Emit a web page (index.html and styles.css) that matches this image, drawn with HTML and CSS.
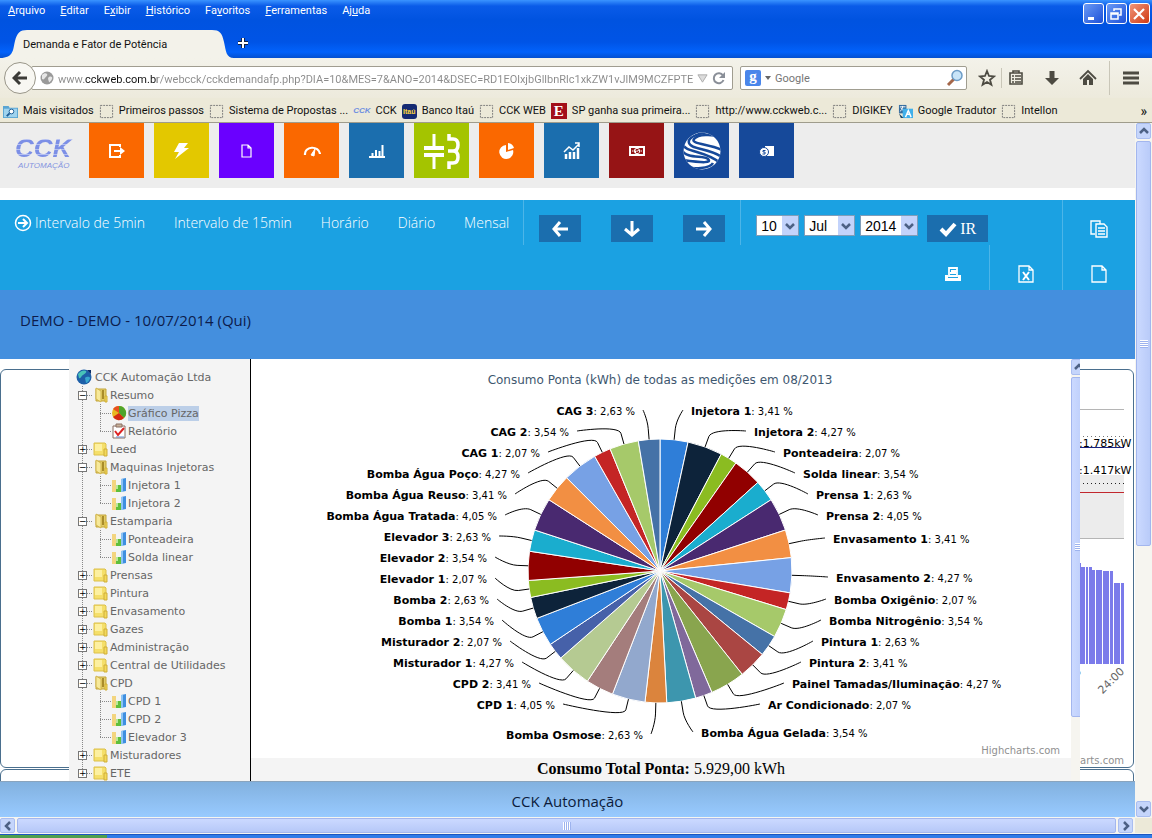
FILE: index.html
```html
<!DOCTYPE html>
<html lang="pt-BR">
<head>
<meta charset="utf-8">
<title>Demanda e Fator de Potência</title>
<link rel="stylesheet" href="styles.css">
</head>
<body>
<svg class="defs" aria-hidden="true">
  <symbol id="folder" viewBox="0 0 16 16"><path d="M1 2h11l1 1v11H1z" fill="#f5df6a" stroke="#dcc04a"/><path d="M2 3h7v7H2z" fill="#fdf0a0"/><path d="M11 8h3v7h-3z" fill="#f3d95b" stroke="#cfae38"/></symbol>
  <symbol id="folder-open" viewBox="0 0 16 16"><path d="M3 2h10v12H3z" fill="#e3cd69" stroke="#c3a53b"/><path d="M3 1l5 3v11l-5-3z" fill="#f7e99a" stroke="#d3b74c"/><path d="M9 3h2v9H9z" fill="#a98c2b"/><path d="M12 9h2v6h-2z" fill="#f3d95b" stroke="#cfae38"/></symbol>
  <symbol id="bars" viewBox="0 0 16 16"><path d="M1 3h4v12H1z" fill="#f3d57f"/><path d="M5 8h5v7H5z" fill="#5fbf3c"/><path d="M10 2l5-1v13l-5 1z" fill="#3f8fe0"/><path d="M10 2l2 0v13h-2z" fill="#8cc4f5"/><path d="M5 8h2v4H5z" fill="#b9e79b"/></symbol>
  <symbol id="pie" viewBox="0 0 16 16"><circle cx="8" cy="8" r="7" fill="#e8b820"/><path d="M8 8V1a7 7 0 0 1 5 12z" fill="#4fa52a"/><path d="M8 8L2 4a7 7 0 0 1 6-3z" fill="#e8501e"/><path d="M8 8l5 5a7 7 0 0 1-11-1z" fill="#d42a12"/></symbol>
  <symbol id="report" viewBox="0 0 16 16"><path d="M2 3h12v12H2z" fill="#fff" stroke="#8a6f62"/><path d="M5 1h6v3H5z" fill="#c9b29a" stroke="#8a6f62"/><path d="M4 8l3 4 6-7" fill="none" stroke="#d22" stroke-width="2"/><path d="M5 14h8" stroke="#6a8fd0"/></symbol>
  <symbol id="globe" viewBox="0 0 16 16"><circle cx="8" cy="8" r="7.500" fill="#1d5fa8"/><path d="M2 5c3-4 7-4 8-3s-1 3-3 4-2 4-4 3z" fill="#48c3b8"/><path d="M9 9c2-2 5-1 5 0s-2 5-4 5z" fill="#39a7cf"/><path d="M11 1h4v4z" fill="#0a2d68"/></symbol>
  <symbol id="blank" viewBox="0 0 16 16"><path d="M1.500 1.500h13v13h-13z" fill="none" stroke="#777" stroke-dasharray="2 1"/></symbol>
  <symbol id="caret" viewBox="0 0 10 8"><path d="M1 2l4 4 4-4" fill="none" stroke="#4d6185" stroke-width="2.500"/></symbol>
</svg>

<header class="titlebar">
  <nav class="menu">
    <a href="#"><u>A</u>rquivo</a><a href="#"><u>E</u>ditar</a><a href="#">E<u>x</u>ibir</a><a href="#"><u>H</u>istórico</a><a href="#">Fa<u>v</u>oritos</a><a href="#"><u>F</u>erramentas</a><a href="#">Aj<u>u</u>da</a>
    <span class="winbtns">
      <button class="win" aria-label="Minimizar"><svg viewBox="0 0 18 18"><path d="M4 12h6v3H4z" fill="#fff"/></svg></button>
      <button class="win" aria-label="Restaurar"><svg viewBox="0 0 18 18"><path d="M7 6V4h7v6h-2M4 8h7v6H4zM4 9h7" fill="none" stroke="#fff" stroke-width="1.500"/></svg></button>
      <button class="win close" aria-label="Fechar"><svg viewBox="0 0 18 18"><path d="M4 4l10 10M14 4L4 14" stroke="#fff" stroke-width="2.200"/></svg></button>
    </span>
  </nav>
  <div class="tabs">
    <svg class="tabshape" viewBox="0 0 234 29" aria-hidden="true"><path d="M0 29C14 29 13 20 15 12S20 1 27 1H212C220 1 222 4 224 13S226 29 234 29z" fill="#f3f2ea"/></svg>
    <span class="tabname">Demanda e Fator de Potência</span>
    <button class="newtab" aria-label="Nova aba"><svg viewBox="0 0 12 12"><path d="M6 1v10M1 6h10" stroke="#124" stroke-width="4"/><path d="M6 1v10M1 6h10" stroke="#fff" stroke-width="2"/></svg></button>
  </div>
</header>

<div class="navbar">
  <button class="back" aria-label="Voltar"><svg viewBox="0 0 16 16"><path d="M8 2L2 8l6 6M2.500 8H15" fill="none" stroke="#3c3b37" stroke-width="3"/></svg></button>
  <div class="field url">
    <svg viewBox="0 0 14 14" class="i14"><circle cx="7" cy="7" r="6.500" fill="#9a9a9a"/><path d="M2 4c2-2 4-2 5-1s-1 3-2 4-1 2-3 1zM9 6c2-1 4 0 3 2s-3 4-3 3-2-4 0-5z" fill="#e6e6e6"/></svg>
    <input class="urltext" aria-label="Endereço" value="www.cckweb.com.br/webcck/cckdemandafp.php?DIA=10&amp;MES=7&amp;ANO=2014&amp;DSEC=RD1EOlxjbGllbnRlc1xkZW1vJlM9MCZFPTE2Jkl">
    <svg viewBox="0 0 12 12" class="i12"><path d="M1 2h10L6 10z" fill="#dcdcdc" stroke="#aaa"/></svg>
    <svg viewBox="0 0 14 14" class="i14"><path d="M11 4.500A5 5 0 1 0 11.500 9" fill="none" stroke="#8a8f98" stroke-width="2"/><path d="M13 1v6H7z" fill="#8a8f98"/></svg>
  </div>
  <div class="field search">
    <span class="g">g</span>
    <svg viewBox="0 0 6 4" class="dd"><path d="M0 0h6L3 4z" fill="#666"/></svg>
    <input aria-label="Pesquisar" placeholder="Google">
    <svg viewBox="0 0 18 18" class="i18"><path d="M2 16l6-6" stroke="#a5674a" stroke-width="3"/><circle cx="11" cy="6.500" r="5" fill="#c8e4f8" stroke="#6d9cc6" stroke-width="1.500"/></svg>
  </div>
  <div class="tools">
    <svg viewBox="0 0 18 18"><path d="M9 2l2 5 5 .4-4 3.300 1.400 5L9 13l-4.400 2.700 1.400-5-4-3.300L7 7z" fill="none" stroke="#4d4b42" stroke-width="1.800"/></svg>
    <i class="sep"></i>
    <svg viewBox="0 0 18 18"><path d="M3 4h12v11H3zM6 2h6v2H6zM5 7h2M8 7h6M5 10h2M8 10h6M5 13h2M8 13h6" fill="none" stroke="#4d4b42" stroke-width="1.600"/></svg>
    <svg viewBox="0 0 18 18"><path d="M6.500 2h5v7H16l-7 7-7-7h4.500z" fill="#4d4b42"/></svg>
    <svg viewBox="0 0 18 18"><path d="M1 10l8-8 8 8" fill="none" stroke="#4d4b42" stroke-width="1.800"/><path d="M4 10l5-5 5 5v6h-4v-5H8v5H4z" fill="#4d4b42"/></svg>
    <i class="sep tall"></i>
    <svg viewBox="0 0 18 18"><path d="M1 4h16M1 9h16M1 14h16" stroke="#4d4b42" stroke-width="3"/></svg>
  </div>
</div>

<nav class="bookmarks">
  <a href="#"><svg viewBox="0 0 16 16"><path d="M0 2h6l1 2h9v11H0z" fill="#5aa5d2"/><path d="M1 5h14v9H1z" fill="#9fd3ee"/><circle cx="9" cy="8" r="2.500" fill="#fff" stroke="#1d5c93"/><path d="M7 10l-3 3" stroke="#1d5c93" stroke-width="2"/></svg>Mais visitados</a>
  <a href="#"><svg><use href="#blank"/></svg>Primeiros passos</a>
  <a href="#"><svg><use href="#blank"/></svg>Sistema de Propostas ...</a>
  <a href="#"><span class="cckico">CCK</span>CCK</a>
  <a href="#"><span class="itau">Itaú</span>Banco Itaú</a>
  <a href="#"><svg><use href="#blank"/></svg>CCK WEB</a>
  <a href="#"><span class="eico">E</span>SP ganha sua primeira...</a>
  <a href="#"><svg><use href="#blank"/></svg>http://www.cckweb.c...</a>
  <a href="#"><svg><use href="#blank"/></svg>DIGIKEY</a>
  <a href="#"><svg viewBox="0 0 16 16"><path d="M1 1h8v9H1z" fill="#356d9f"/><path d="M2 3h6M5 2c0 4-2 5-3 6M3 4c1 2 3 3 4 4" stroke="#fff" fill="none"/><path d="M5 5h11v10H5z" fill="#41b0ea"/><path d="M8 14l3-7 3 7M9 11h4" stroke="#fff" stroke-width="1.500" fill="none"/><path d="M1 10l5 5H3z" fill="#1c4566"/></svg>Google Tradutor</a>
  <a href="#"><svg><use href="#blank"/></svg>Intellon</a>
  <span class="more">»</span>
</nav>

<div class="view">
  <div class="page">
    <header class="apps">
      <div class="logo"><b>CCK</b><small>AUTOMAÇÃO</small></div>
      <button class="tile orange" aria-label="Sair"><svg viewBox="0 0 18 18"><path d="M12 5V3H2v12h10v-2" fill="none" stroke="#fff" stroke-width="2"/><path d="M6 8h6V5l5 4-5 4v-3H6z" fill="#fff"/></svg></button>
      <button class="tile yellow" aria-label="Energia"><svg viewBox="0 0 18 18"><path d="M6 1h9l-4 5h5L2 17l4-7H1z" fill="#fff"/></svg></button>
      <button class="tile violet" aria-label="Documento"><svg viewBox="0 0 18 18"><path d="M4 3h6l3 3v9H4zM10 3v3h3" fill="none" stroke="#fff" stroke-width="1.200"/></svg></button>
      <button class="tile orange" aria-label="Medidor"><svg viewBox="0 0 18 18"><path d="M2 13c-1-9 14-10 15-1" fill="none" stroke="#fff" stroke-width="2.200"/><path d="M12 7l-1 7-3-1z" fill="#fff" stroke="#fff"/></svg></button>
      <button class="tile blue" aria-label="Barras"><svg viewBox="0 0 18 18"><path d="M1 15h16M4.500 11v3M8 8v6M11.500 9v5M14.500 3v11" stroke="#fff" stroke-width="2"/></svg></button>
      <button class="tile green" aria-label="Capacitor"><svg class="big" viewBox="0 0 40 40"><path d="M12 3v13M12 25v13" stroke="#fff" stroke-width="3"/><path d="M2 17h20M2 24h20" stroke="#fff" stroke-width="4"/><path d="M27 3v5h4q5 0 5 6t-5 6h-5M31 20q5 0 5 6t-5 6h-4v6" fill="none" stroke="#fff" stroke-width="3.500"/></svg></button>
      <button class="tile orange" aria-label="Pizza"><svg viewBox="0 0 18 18"><path d="M8 3v7l7-2a7 7 0 1 1-7-5z" fill="#fff"/><path d="M10 1a7 7 0 0 1 6 5l-6 2z" fill="#fff"/></svg></button>
      <button class="tile blue" aria-label="Tendência"><svg viewBox="0 0 18 18"><path d="M3 12v5M7 10v7M11 10v7M15 6v11" stroke="#fff" stroke-width="2.500"/><path d="M1 10l5-5 4 3 6-6M12 1h4v4" fill="none" stroke="#fff" stroke-width="1.500"/></svg></button>
      <button class="tile red" aria-label="Custo"><svg viewBox="0 0 18 18"><path d="M1 4h16v10H1z" fill="#fff"/><path d="M3 6h12v6H3z" fill="#961415"/><circle cx="9" cy="9" r="3" fill="#fff"/><path d="M10.500 7.500H8v1.500h2.500v1.500H8" stroke="#961415" fill="none"/><path d="M4 9h1.500M12.500 9H14" stroke="#fff"/></svg></button>
      <button class="tile navy" aria-label="Esfera"><svg class="big" viewBox="0 0 40 40"><clipPath id="ball"><circle cx="20" cy="20" r="18.500"/></clipPath><g clip-path="url(#ball)"><path d="M0 0h40v40H0z" fill="#fff"/><g fill="none" stroke="#16499a" stroke-width="2.500"><path d="M40 6C30 3 16 3 12 8s16 5 28 11"/><path d="M30 0C20 2 5 5 7 12s22 5 34 15"/><path d="M0 12c2 10 24 7 38 20"/><path d="M0 19c4 9 22 5 26 9s-4 4-26 1"/><path d="M0 36c12 2 28 2 31-4"/></g></g></svg></button>
      <button class="tile navy" aria-label="Fatura"><svg viewBox="0 0 18 18"><path d="M7 4h9v10H7z" fill="#fff"/><circle cx="6" cy="10" r="4.500" fill="#fff" stroke="#14489a"/><path d="M7.500 8.500H5V10h2v2H4.500" stroke="#14489a" fill="none"/></svg></button>
    </header>

    <div class="actions">
      <div class="row">
        <nav class="ranges">
          <a href="#"><svg viewBox="0 0 18 18"><circle cx="9" cy="9" r="7.500" fill="none" stroke="#fff" stroke-width="1.500"/><path d="M4 9h9M9 5l4 4-4 4" fill="none" stroke="#fff" stroke-width="2"/></svg>Intervalo de 5min</a>
          <a href="#">Intervalo de 15min</a><a href="#">Horário</a><a href="#">Diário</a><a href="#">Mensal</a>
        </nav>
        <div class="group arrows">
          <button aria-label="Anterior"><svg viewBox="0 0 18 18"><path d="M9 2L3 9l6 7M3 9h14" fill="none" stroke="#fff" stroke-width="3"/></svg></button>
          <button aria-label="Abaixo"><svg viewBox="0 0 18 18"><path d="M2 9l7 6 7-6M9 15V1" fill="none" stroke="#fff" stroke-width="3"/></svg></button>
          <button aria-label="Próximo"><svg viewBox="0 0 18 18"><path d="M9 2l6 7-6 7M15 9H1" fill="none" stroke="#fff" stroke-width="3"/></svg></button>
        </div>
        <div class="group dates">
          <span class="pick"><select aria-label="Dia" class="day"><option>10</option></select><svg><use href="#caret"/></svg></span>
          <span class="pick"><select aria-label="Mês" class="month"><option>Jul</option></select><svg><use href="#caret"/></svg></span>
          <span class="pick"><select aria-label="Ano" class="year"><option>2014</option></select><svg><use href="#caret"/></svg></span>
          <button class="go"><svg viewBox="0 0 18 18"><path d="M2 9l5 5 9-10" fill="none" stroke="#fff" stroke-width="4"/></svg>IR</button>
        </div>
        <button class="cell" aria-label="Copiar"><svg viewBox="0 0 18 18"><path d="M5 14H1V1h9v3M6 4h8l3 3v10H6zM8 8h7M8 11h7M8 14h7" fill="none" stroke="#fff" stroke-width="1.400"/></svg></button>
      </div>
      <div class="row end">
        <button class="cell plain" aria-label="Imprimir"><svg viewBox="0 0 18 18"><path d="M5 3h8v8H5zM7 6h6M6 8h6" fill="none" stroke="#fff" stroke-width="1.800"/><path d="M1 10h3v3h10v-3h3v6H1z" fill="#fff"/></svg></button>
        <button class="cell" aria-label="Excel"><svg viewBox="0 0 18 18"><path d="M2 1h10l4 4v12H2zM12 1v4h4" fill="none" stroke="#fff" stroke-width="1.300"/><path d="M6 7l6 8M12 7l-6 8" stroke="#fff" stroke-width="2"/></svg></button>
        <button class="cell" aria-label="Novo"><svg viewBox="0 0 18 18"><path d="M2 1h10l4 4v12H2zM12 1v4h4" fill="none" stroke="#fff" stroke-width="1.300"/></svg></button>
      </div>
    </div>

    <h1 class="heading">DEMO - DEMO - 10/07/2014 (Qui)</h1>

    <main class="stage">
      <section class="panel">
        <svg class="demand" viewBox="0 0 54 398" aria-label="Demanda">
          <path d="M0 105h45v64H0z" fill="#ececec"/>
          <path d="M0 39.500h45M0 168.500h45" stroke="#b5b5b5"/>
          <path d="M0 66.500h45" stroke="#777" stroke-dasharray="1 3"/>
          <path d="M0 77.500h45" stroke="#1a237e"/>
          <path d="M0 113.500h45" stroke="#222" stroke-dasharray="1 3"/>
          <path d="M0 122.500h45" stroke="#c1272d"/>
          <text x="0" y="77">:1.785kW</text><text x="0" y="104">:1.417kW</text>
          <path d="M0 193h2v4h4v97H0zM7 197h2v97H7zM10 197h3v3h3v94h-6zM17 200h6v94h-6zM24 201h6v93h-6zM31 201h3v93h-3zM35 213h6v81h-6zM42 213h3v81h-3z" fill="#7b7bea"/>
          <text class="tick" transform="translate(46 302) rotate(-45)" text-anchor="end">24:00</text>
          <text class="tick" transform="translate(3 302) rotate(-45)" text-anchor="end">23:00</text>
          <text class="credit" x="45" y="394" text-anchor="end">Highcharts.com</text>
        </svg>
      </section>
      <section class="panel next"></section>

      <div class="modal">
        <div class="tree">
          <div class="node root"><svg><use href="#globe"/></svg><a href="#">CCK Automação Ltda</a></div>
          <ul class="lvl1">
            <li><div class="node"><button aria-label="Recolher">−</button><i></i><svg><use href="#folder-open"/></svg><a href="#">Resumo</a></div>
              <ul><li class="node"><i></i><svg><use href="#pie"/></svg><a href="#" class="on">Gráfico Pizza</a></li><li class="node"><i></i><svg><use href="#report"/></svg><a href="#">Relatório</a></li></ul></li>
            <li><div class="node"><button aria-label="Expandir">+</button><i></i><svg><use href="#folder"/></svg><a href="#">Leed</a></div></li>
            <li><div class="node"><button aria-label="Recolher">−</button><i></i><svg><use href="#folder-open"/></svg><a href="#">Maquinas Injetoras</a></div>
              <ul><li class="node"><i></i><svg><use href="#bars"/></svg><a href="#">Injetora 1</a></li><li class="node"><i></i><svg><use href="#bars"/></svg><a href="#">Injetora 2</a></li></ul></li>
            <li><div class="node"><button aria-label="Recolher">−</button><i></i><svg><use href="#folder-open"/></svg><a href="#">Estamparia</a></div>
              <ul><li class="node"><i></i><svg><use href="#bars"/></svg><a href="#">Ponteadeira</a></li><li class="node"><i></i><svg><use href="#bars"/></svg><a href="#">Solda linear</a></li></ul></li>
            <li><div class="node"><button aria-label="Expandir">+</button><i></i><svg><use href="#folder"/></svg><a href="#">Prensas</a></div></li>
            <li><div class="node"><button aria-label="Expandir">+</button><i></i><svg><use href="#folder"/></svg><a href="#">Pintura</a></div></li>
            <li><div class="node"><button aria-label="Expandir">+</button><i></i><svg><use href="#folder"/></svg><a href="#">Envasamento</a></div></li>
            <li><div class="node"><button aria-label="Expandir">+</button><i></i><svg><use href="#folder"/></svg><a href="#">Gazes</a></div></li>
            <li><div class="node"><button aria-label="Expandir">+</button><i></i><svg><use href="#folder"/></svg><a href="#">Administração</a></div></li>
            <li><div class="node"><button aria-label="Expandir">+</button><i></i><svg><use href="#folder"/></svg><a href="#">Central de Utilidades</a></div></li>
            <li><div class="node"><button aria-label="Recolher">−</button><i></i><svg><use href="#folder-open"/></svg><a href="#">CPD</a></div>
              <ul><li class="node"><i></i><svg><use href="#bars"/></svg><a href="#">CPD 1</a></li><li class="node"><i></i><svg><use href="#bars"/></svg><a href="#">CPD 2</a></li><li class="node"><i></i><svg><use href="#bars"/></svg><a href="#">Elevador 3</a></li></ul></li>
            <li><div class="node"><button aria-label="Expandir">+</button><i></i><svg><use href="#folder"/></svg><a href="#">Misturadores</a></div></li>
            <li><div class="node"><button aria-label="Expandir">+</button><i></i><svg><use href="#folder"/></svg><a href="#">ETE</a></div></li>
          </ul>
        </div>
        <div class="report">
          <svg id="chart" class="chart" viewBox="-409 -212 820 399" role="img" aria-label="Consumo Ponta por medição"></svg>
          <p class="total"><b>Consumo Total Ponta:</b> 5.929,00 kWh</p>
        </div>
        <div class="vbar inner" aria-hidden="true"><span class="btn"><svg class="up"><use href="#caret"/></svg></span><span class="thumb"><i class="grip"></i></span></div>
      </div>
    </main>

    <footer class="foot">CCK Automação</footer>
  </div>
  <div class="vbar" aria-hidden="true"><span class="btn"><svg class="up"><use href="#caret"/></svg></span><span class="thumb"><i class="grip"></i></span><span class="track"></span><span class="btn"><svg><use href="#caret"/></svg></span></div>
</div>
<div class="hbar" aria-hidden="true"><span class="btn"><svg class="left"><use href="#caret"/></svg></span><span class="thumb"><i class="grip"></i></span><span class="btn"><svg class="right"><use href="#caret"/></svg></span><span class="corner"></span></div>
<div class="taskbar"><span></span></div>
<script src="chart.js"></script>
</body>
</html>
```

FILE: styles.css
```css
* { box-sizing: border-box; }
body {
  margin: 0; height: 100vh; overflow: hidden; display: flex; flex-direction: column;
  font: 11px/14px Roboto, "Noto Sans", sans-serif; color: #111; background: #fff;
}
a { color: inherit; text-decoration: none; }
button { border: 0; padding: 0; margin: 0; background: none; font: inherit; color: inherit; }
input { border: 0; padding: 0; background: none; font: inherit; min-width: 0; outline: 0; }
svg { display: block; flex: none; }
.defs { position: absolute; width: 0; height: 0; }

.titlebar { flex: none; height: 58px; background: linear-gradient(#3a93ff 0, #0a5be8 6px, #0053e0 20px, #0054e6 42px, #0262fb 52px, #0450d0 58px); }
.menu { display: flex; align-items: flex-start; gap: 15px; height: 28px; padding: 3px 2px 0 8px; color: #fff; line-height: 16px; }
.winbtns { display: flex; gap: 2px; margin-left: auto; }
.win { width: 21px; height: 21px; border: 1px solid #fff; border-radius: 3px; background: linear-gradient(135deg, #6a9af5, #1c50d8); }
.win.close { background: linear-gradient(135deg, #f0957a, #d03a12); }
.win svg { width: 18px; height: 18px; }
.tabs { position: relative; display: flex; align-items: center; height: 30px; }
.tabshape { position: absolute; left: 0; top: 1px; width: 234px; height: 29px; }
.tabname { position: relative; width: 237px; padding: 3px 0 0 23px; }
.newtab svg { width: 12px; height: 12px; }

.navbar { flex: none; display: flex; align-items: center; height: 40px; padding-left: 4px; background: linear-gradient(#f3f2ea, #edeadc); }
.back { position: relative; width: 32px; height: 32px; margin-right: -5px; border: 1px solid #999689; border-radius: 50%; background: #f8f7f2; display: grid; place-items: center; flex: none; }
.back svg { width: 16px; height: 16px; }
.field { display: flex; align-items: center; height: 24px; background: #fff; border: 1px solid #a09d90; border-radius: 2px; }
.url { flex: 1; padding: 0 6px 0 8px; gap: 4px; margin-right: 7px; }
.urltext {
  flex: 1; height: 16px; padding-top: 2px; color: transparent; -webkit-text-fill-color: transparent;
  background: linear-gradient(90deg, #8a8a8a 26px, #111 26px, #111 99px, #8a8a8a 99px);
  background-clip: text; -webkit-background-clip: text;
}
.i12 { width: 11px; height: 11px; }
.i14 { width: 14px; height: 14px; }
.i18 { width: 18px; height: 18px; }
.search { width: 227px; padding: 0 2px 0 4px; gap: 4px; color: #777; }
.search input { flex: 1; padding-top: 2px; }
.g { width: 16px; height: 16px; border-radius: 2px; background: #4a86ea; color: #fff; font: bold 15px/12px "Liberation Serif", serif; text-align: center; }
.dd { width: 6px; height: 4px; }
.tools { display: flex; align-items: center; gap: 18px; padding: 0 12px 0 11px; height: 100%; }
.tools svg { width: 18px; height: 18px; }
.sep { width: 1px; height: 20px; background: #c9c6b8; margin: 0 -13px; }
.sep.tall { height: 34px; margin: 0 -6px; }

.bookmarks { flex: none; display: flex; align-items: center; gap: 5px; height: 25px; padding: 1px 5px 0 3px; background: #ece9d8; border-bottom: 1px solid #9f9c8c; white-space: nowrap; line-height: 16px; }
.bookmarks a { display: flex; align-items: center; gap: 5px; padding-top: 1px; }
.bookmarks svg { width: 15px; height: 15px; }
.more { margin-left: auto; font-size: 14px; }
.cckico { color: #6f8fe0; font: italic bold 8px/14px "Liberation Sans", sans-serif; }
.itau { width: 15px; height: 15px; border-radius: 3px; background: #152a73; color: #ffd93b; font: bold 7px/16px "Liberation Sans", sans-serif; text-align: center; }
.eico { width: 16px; height: 16px; background: #a30f19; color: #fff; font: bold 15px/16px "Liberation Serif", serif; text-align: center; }

.view { flex: 1; min-height: 0; display: flex; }
.page { flex: 1; min-width: 0; display: flex; flex-direction: column; }

.apps { flex: none; display: flex; gap: 10px; height: 65px; margin-bottom: 12px; padding-left: 15px; background: #ededed; }
.logo { width: 64px; padding-top: 12px; }
.logo b { display: block; font: italic bold 26px/26px "Liberation Sans", sans-serif; color: transparent; background: repeating-linear-gradient(#7c8fe6 0 4px, #b5c0f1 4px 5px); background-clip: text; -webkit-background-clip: text; }
.logo small { display: block; font: italic 8px/10px "Liberation Sans", sans-serif; color: #8494e0; padding-left: 3px; }
.tile { width: 55px; height: 55px; display: grid; place-items: center; }
.tile svg { width: 18px; height: 18px; }
.tile svg.big { width: 40px; height: 40px; }
.orange { background: #fa6800; }
.yellow { background: #e3c800; }
.violet { background: #6a00ff; }
.blue { background: #1b6eae; }
.green { background: #a4c400; }
.red { background: #961415; }
.navy { background: #16499a; }

.actions { flex: none; background: #1ba1e2; color: #fff; }
.row { display: flex; height: 45px; }
.row.end { justify-content: flex-end; }
.ranges { display: flex; align-items: flex-start; gap: 29px; padding: 14px 14px 0 14px; font: 300 14px/18px "Open Sans", sans-serif; white-space: nowrap; }
.ranges a { display: flex; align-items: center; gap: 3px; }
.ranges svg { width: 18px; height: 18px; }
.group { display: flex; align-items: flex-start; border-left: 1px solid #4cb5e8; padding: 15px 15px 0; }
.arrows { gap: 30px; }
.arrows button, .go { height: 27px; width: 42px; background: #1b6eae; display: grid; place-items: center; }
.arrows svg, .go svg { width: 18px; height: 18px; }
.dates { gap: 5px; }
.dates .go { width: 61px; margin-left: 4px; display: flex; align-items: center; justify-content: center; gap: 3px; font: 16px/29px "Liberation Serif", serif; }
.pick { position: relative; }
.pick select { appearance: none; height: 21px; padding: 0 4px; border: 1px solid #7f9db9; border-radius: 0; background: linear-gradient(90deg, #fff calc(100% - 16px), #c3d3fb calc(100% - 16px)); font: 14px/18px "Liberation Sans", sans-serif; color: #000; display: block; }
.pick svg { position: absolute; right: 4px; top: 7px; width: 10px; height: 8px; pointer-events: none; }
.day { width: 43px; }
.month { width: 51px; }
.year { width: 58px; }
.cell { width: 73px; height: 45px; border-left: 1px solid #4cb5e8; display: grid; place-items: center; padding-top: 12px; }
.cell svg { width: 18px; height: 18px; }
.cell.plain { border-left: 0; }
.row > .cell:last-child { margin-left: auto; }
.row.end > .cell:last-child { margin-left: 0; }

.heading { flex: none; height: 69px; margin: 0; padding: 19px 20px 0; background: #448fde; color: #0c1c4c; font: 15px/22px "Open Sans", sans-serif; }

.stage { position: relative; flex: 1; min-height: 0; overflow: hidden; padding-top: 10px; display: flex; flex-direction: column; gap: 1px; }
.panel { flex: none; height: 399px; margin-right: 1px; border: 1px solid #4a6f8e; border-radius: 6px; display: flex; justify-content: flex-end; }
.demand { width: 54px; height: 398px; overflow: visible; font: 11px "DejaVu Sans", sans-serif; }
.tick { font-size: 11px; fill: #666; }
.credit { font: 10px "DejaVu Sans", sans-serif; fill: #909090; }
.modal { position: absolute; top: 0; bottom: 0; left: 69px; right: 55px; display: flex; background: #fff; }

.tree { flex: none; width: 182px; padding-top: 9px; background: #f4f4f4; border-right: 1px solid #000; font: 11px/14px "DejaVu Sans", sans-serif; color: #666; overflow: hidden; white-space: nowrap; }
.tree ul { list-style: none; margin: 0; padding: 0; }
.node { display: flex; align-items: center; height: 18px; }
.node svg { width: 16px; height: 16px; margin-right: 1px; }
.node a { padding-top: 1px; }
.root { padding-left: 7px; }
.root svg { margin-right: 3px; }
.lvl1 { background: repeating-linear-gradient(#888 0 1px, transparent 1px 2px) 13px 0 / 1px calc(100% - 9px) no-repeat; }
.lvl1 > li > .node { padding-left: 9px; }
.node button { width: 9px; height: 9px; border: 1px solid #777; background: #fff; color: #000; font: 9px/7px "DejaVu Sans", sans-serif; text-align: center; }
.node i { width: 6px; height: 1px; background: repeating-linear-gradient(90deg, #888 0 1px, transparent 1px 2px); }
.lvl1 ul { margin-left: 31px; background: repeating-linear-gradient(#888 0 1px, transparent 1px 2px) 0 0 / 1px calc(100% - 9px) no-repeat; }
.lvl1 ul i { width: 11px; }
.node a.on { background: #bccfe8; }

.report { flex: 1; min-width: 0; display: flex; flex-direction: column; background: #f4f4f4; }
.chart { width: 100%; height: 399px; background: #fff; font: 10px "DejaVu Sans", sans-serif; }
.chart .name { font-size: 11px; font-weight: bold; }
.chart .title { font-size: 12px; fill: #3e576f; }
.total { margin: 0; font: 16px/22px "Liberation Serif", serif; color: #000; text-align: center; }

.vbar { flex: none; width: 17px; display: flex; flex-direction: column; background: #f6f5f0; padding: 0 1px; }
.btn { flex: none; width: 15px; height: 16px; border-radius: 2px; background: #c5d5fb; border: 1px solid #a9bdf0; display: grid; place-items: center; }
.btn svg { width: 10px; height: 8px; }
.btn svg.up { transform: rotate(180deg); }
.btn svg.left { transform: rotate(90deg); }
.btn svg.right { transform: rotate(-90deg); }
.thumb { display: grid; place-items: center; border: 1px solid #a3b6ee; border-radius: 2px; background: #c4d3fc; }
.vbar .thumb { flex: 59; margin: 2px 0; background: linear-gradient(90deg, #cbd9ff, #b9cbf9); }
.vbar .track { flex: 37; }
.grip { width: 8px; height: 8px; background: repeating-linear-gradient(#fff 0 1px, #9db3ee 1px 2px); }
.inner { width: 9px; overflow: hidden; padding: 0; }
.inner .thumb { flex: none; height: 340px; width: 15px; }

.foot { flex: none; height: 36px; background: linear-gradient(#82b1df, #98caff); border-top: 1px solid #8aa4bd; color: #0c1c3c; text-align: center; font: 15px/38px "Open Sans", sans-serif; }
.hbar { flex: none; height: 17px; display: flex; background: #f6f5f0; padding: 1px 0; gap: 2px; }
.hbar .thumb { flex: 1; background: linear-gradient(#cbd9ff, #b6c8f8); }
.hbar .grip { background: repeating-linear-gradient(90deg, #fff 0 1px, #9db3ee 1px 2px); }
.hbar .btn { height: 15px; }
.corner { width: 17px; background: #ece9d8; }
.taskbar { flex: none; height: 4px; background: #2f7be8; border-top: 1px solid #1c56c0; }
.taskbar span { display: block; width: 107px; height: 3px; background: #4f9f4c; }
```

FILE: chart.js
```js
// name, value, colour, label x and y measured from the centre of the pie
const slices = [
  ["Injetora 1", 3.41, "#2f7ed8", 31, -160],
  ["Injetora 2", 4.27, "#0d233a", 94, -139],
  ["Ponteadeira", 2.07, "#8bbc21", 123, -118],
  ["Solda linear", 3.54, "#910000", 143, -97],
  ["Prensa 1", 2.63, "#1aadce", 156, -76],
  ["Prensa 2", 4.05, "#492970", 166, -55],
  ["Envasamento 1", 3.41, "#f28f43", 173, -32],
  ["Envasamento 2", 4.27, "#77a1e5", 176, 7],
  ["Bomba Oxigênio", 2.07, "#c42525", 174, 29],
  ["Bomba Nitrogênio", 3.54, "#a6c96a", 169, 50],
  ["Pintura 1", 2.63, "#4572a7", 161, 71],
  ["Pintura 2", 3.41, "#aa4643", 149, 92],
  ["Painel Tamadas/Iluminação", 4.27, "#89a54e", 132, 113],
  ["Ar Condicionado", 2.07, "#80699b", 108, 134],
  ["Bomba Água Gelada", 3.54, "#3d96ae", 41, 162],
  ["Bomba Osmose", 2.63, "#db843d", -17, 164],
  ["CPD 1", 4.05, "#92a8cd", -105, 134],
  ["CPD 2", 3.41, "#a47d7c", -129, 113],
  ["Misturador 1", 4.27, "#b5ca92", -146, 92],
  ["Misturador 2", 2.07, "#4661a9", -158, 71],
  ["Bomba 1", 3.54, "#2f7ed8", -166, 50],
  ["Bomba 2", 2.63, "#0d233a", -171, 29],
  ["Elevador 1", 2.07, "#8bbc21", -173, 8],
  ["Elevador 2", 3.54, "#910000", -173, -13],
  ["Elevador 3", 2.63, "#1aadce", -169, -34],
  ["Bomba Água Tratada", 4.05, "#492970", -163, -55],
  ["Bomba Água Reuso", 3.41, "#f28f43", -153, -76],
  ["Bomba Água Poço", 4.27, "#77a1e5", -140, -97],
  ["CAG 1", 2.07, "#c42525", -120, -118],
  ["CAG 2", 3.54, "#a6c96a", -91, -139],
  ["CAG 3", 2.63, "#4572a7", -25, -160]
];
const R = 132;
const total = slices.reduce((sum, s) => sum + s[1], 0);
const at = (turn, r) => [r * Math.sin(turn * 2 * Math.PI), -r * Math.cos(turn * 2 * Math.PI)];
let out = '<text class="title" y="-187" text-anchor="middle">Consumo Ponta (kWh) de todas as medições em 08/2013</text>';
let sum = 0;
for (const [name, value, color, x, y] of slices) {
  const from = sum / total;
  sum += value;
  const to = sum / total;
  const mid = (from + to) / 2;
  const side = x > 0 ? -1 : 1;
  const edge = at(mid, R);
  const knee = at(mid, R + 11);
  const far = at(mid, R + 20);
  const start = `${x + 8 * side} ${y - 1}`;
  out += `<path d="M0 0L${at(from, R)}A${R} ${R} 0 0 1 ${at(to, R)}Z" fill="${color}" stroke="#fff"/>`;
  out += `<path d="M${start}C${start} ${far} ${knee}L${edge}" fill="none" stroke="#000"/>`;
  out += `<text x="${x}" y="${y + 4}" text-anchor="${x > 0 ? "start" : "end"}"><tspan class="name">${name}</tspan>: ${value.toFixed(2).replace(".", ",")} %</text>`;
}
out += '<text class="credit" x="400" y="183" text-anchor="end">Highcharts.com</text>';
document.getElementById("chart").innerHTML = out;
```
